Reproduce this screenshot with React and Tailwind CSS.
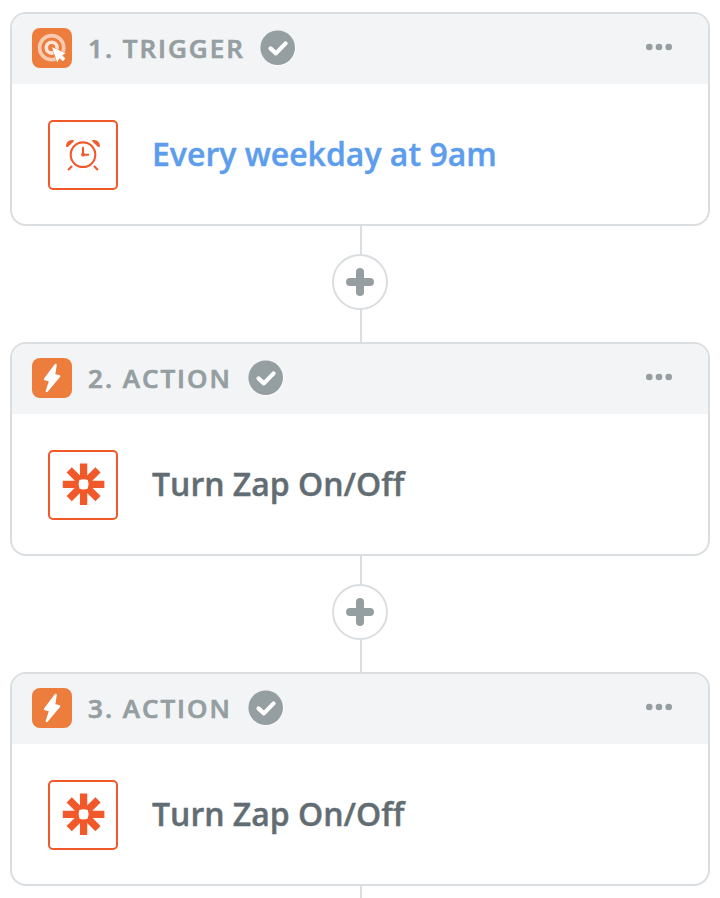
const TriggerIcon = () => (
    <svg className="w-10 h-10 text-white" viewBox="0 0 40 40" fill="none">
        <circle cx="19.7" cy="19.7" r="12.1" stroke="currentColor" strokeWidth="3.6" opacity="0.6" />
        <circle cx="19.7" cy="19.7" r="5.4" stroke="currentColor" strokeWidth="3.6" opacity="0.8" />
        <path
            d="M20 19.3L33.6 25.2L30.1 27.3L33.4 30.6L30.8 33.2L27.4 29.9L25.2 34.4Z"
            fill="currentColor"
            stroke="#ed7d3c"
            strokeWidth="0.8"
            strokeLinejoin="round"
            paintOrder="stroke"
        />
    </svg>
);

const BoltIcon = () => (
    <svg className="w-10 h-10 text-white" viewBox="0 0 40 40">
        <path
            d="M23.6 7L13 21.2L18.3 22.3L14.8 33L27.1 18.2L22 17.2Z"
            fill="currentColor"
            stroke="currentColor"
            strokeWidth="2.3"
            strokeLinejoin="round"
        />
    </svg>
);

const ClockIcon = () => (
    <svg className="w-[66px] h-[66px]" viewBox="2 2 66 66" fill="none" stroke="#f1592a" strokeWidth="2.1" strokeLinecap="round">
        <circle cx="35" cy="34.7" r="12.3" />
        <path d="M35 27.8V34.7H40.2" />
        <circle cx="35" cy="34.7" r="1.9" fill="#f1592a" stroke="none" />
        <path d="M23.5 46.6L20.7 49.4M46.5 46.6L49.3 49.4" />
        <path d="M18.3 27C17.3 22.4 21.5 18.8 26 20.2L25.4 21.7L19.8 26.9Z" fill="#f1592a" stroke="none" />
        <path d="M51.7 27C52.7 22.4 48.5 18.8 44 20.2L44.6 21.7L50.2 26.9Z" fill="#f1592a" stroke="none" />
    </svg>
);

const ZapierIcon = () => (
    <svg className="w-[66px] h-[66px]" viewBox="2 2 66 66">
        <path
            d="M35.6 13.5V55.1M14.8 34.3H56.4M21.2 19.9L50 48.7M50 19.9L21.2 48.7"
            stroke="#f1592a"
            strokeWidth="7.3"
        />
        <path d="M31.4 30.1Q35.6 28.3 39.8 30.1Q41.6 34.3 39.8 38.5Q35.6 40.3 31.4 38.5Q29.6 34.3 31.4 30.1Z" fill="#fff" />
    </svg>
);

const CheckBadge = () => (
    <svg className="w-9 h-9" viewBox="0 0 36 36" fill="none">
        <circle cx="18.3" cy="18.3" r="17.4" fill="#fff" />
        <circle cx="17.7" cy="17.7" r="17.3" fill="#959ea0" />
        <path d="M10.5 18.4L15.9 23.4L25.6 13.4" stroke="#fff" strokeWidth="4.2" strokeLinecap="round" strokeLinejoin="round" />
    </svg>
);

const MoreIcon = () => (
    <svg className="w-7 h-2" viewBox="0 0 28 8" fill="#959ea0">
        <circle cx="4.3" cy="4" r="3.3" />
        <circle cx="14" cy="4" r="3.3" />
        <circle cx="23.7" cy="4" r="3.3" />
    </svg>
);

const Connector = () => (
    <div className="flex flex-col items-center">
        <div className="w-0.5 h-7 ml-0.5 bg-[#dadee1]" />
        <button className="w-14 h-14 rounded-full border-2 border-[#dadee1] bg-white flex items-center justify-center" aria-label="Add step">
            <svg className="w-7 h-7" viewBox="0 0 28 28" stroke="#959ea0" strokeWidth="8" strokeLinecap="round">
                <path d="M14 4V24M4 14H24" />
            </svg>
        </button>
        <div className="w-0.5 h-8 ml-0.5 bg-[#dadee1]" />
    </div>
);

const steps = [
    { type: 'Trigger', title: 'Every weekday at 9am' },
    { type: 'Action', title: 'Turn Zap On/Off' },
    { type: 'Action', title: 'Turn Zap On/Off' },
];

const StepCard = ({ step, number }) => {
    const isTrigger = step.type === 'Trigger';
    return (
        <section className="h-[214px] border-2 border-[#dadee1] rounded-2xl overflow-hidden bg-white">
            <header className="h-[70px] pl-5 pr-[35px] flex items-center bg-[#f2f4f6]">
                <div className="w-10 h-10 mb-0.5 rounded-lg bg-[#ed7d3c]">
                    {isTrigger ? <TriggerIcon /> : <BoltIcon />}
                </div>
                <h2 className="ml-4 mb-0.5 text-[26px] leading-9 font-semibold tracking-[2px] uppercase whitespace-nowrap text-[#959ea0] [-webkit-text-stroke:0.7px_#959ea0]">
                    {number}. {step.type}
                </h2>
                <div className={`mb-0.5 ${isTrigger ? 'ml-[15px]' : 'ml-4'}`}>
                    <CheckBadge />
                </div>
                <button className="ml-auto mb-1" aria-label="Step options">
                    <MoreIcon />
                </button>
            </header>
            <div className="h-[140px] px-9 flex items-center">
                <div className="w-[70px] h-[70px] mt-0.5 border-2 border-[#f1592a] rounded-[5px]">
                    {isTrigger ? <ClockIcon /> : <ZapierIcon />}
                </div>
                <h3 className={`ml-[34px] text-[32px] leading-10 font-semibold [-webkit-text-stroke:0.4px] ${isTrigger ? 'text-[#5c9ded]' : 'text-[#626d73]'}`}>
                    {step.title}
                </h3>
            </div>
        </section>
    );
};

const App = () => {
    return (
        <main className="w-[720px] h-[898px] overflow-hidden bg-white px-2.5 pt-3 font-['Open_Sans',sans-serif]">
            {steps.map((step, index) => (
                <div key={index}>
                    <StepCard step={step} number={index + 1} />
                    <Connector />
                </div>
            ))}
        </main>
    );
};

export default App;
